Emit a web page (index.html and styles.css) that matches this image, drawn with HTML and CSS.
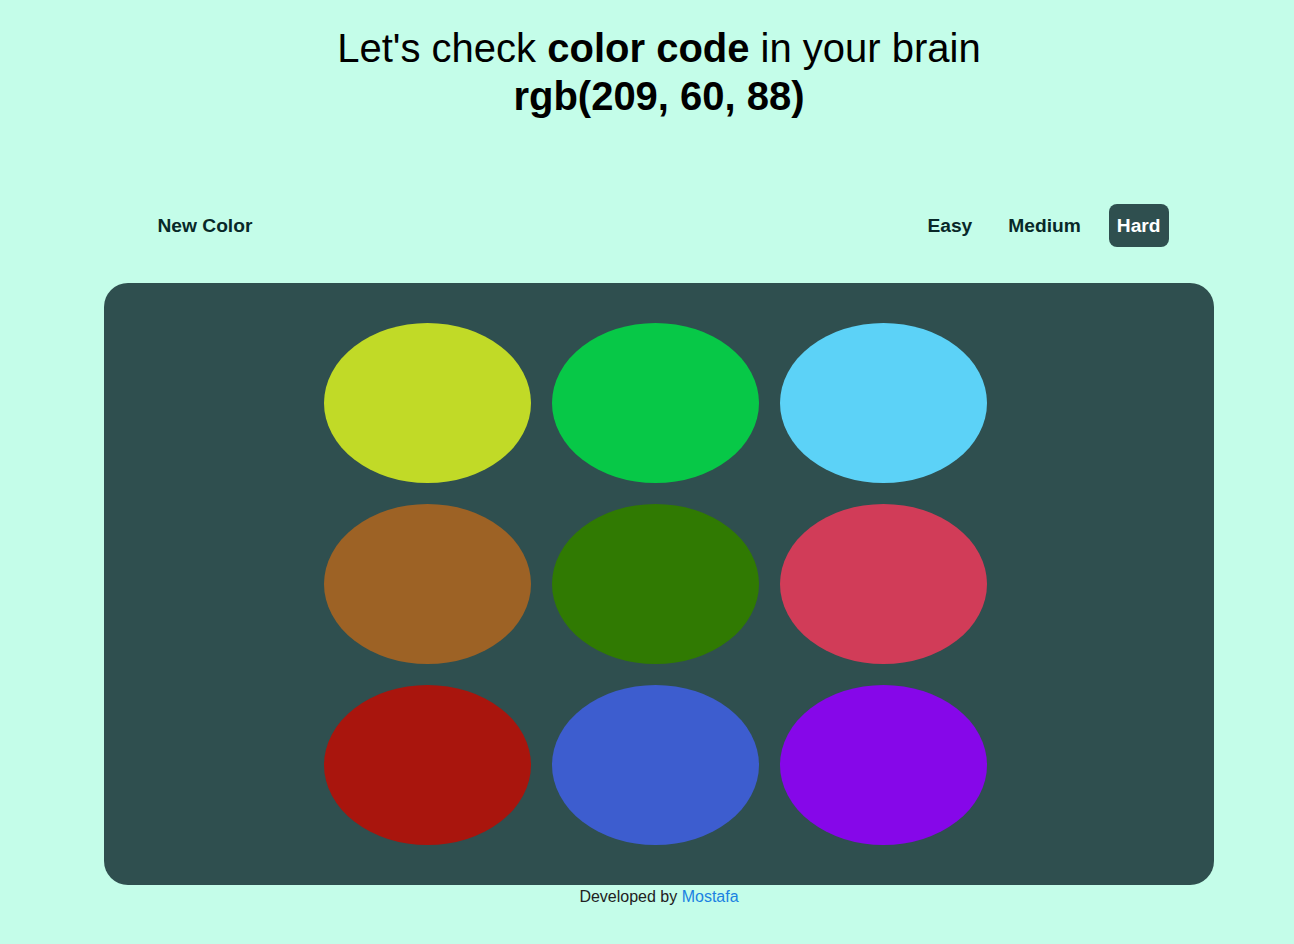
FILE: index.html
```html
<!DOCTYPE html>
<html lang="en">
<head>
<meta charset="utf-8">
<title>Color Game</title>
<link rel="stylesheet" href="styles.css">
</head>
<body>
<div class="page">
  <h1 class="title">Let's check <strong>color code</strong> in your brain<br><strong>rgb(209, 60, 88)</strong></h1>
  <div class="controls">
    <button class="btn">New Color</button>
    <div class="modes">
      <button class="btn">Easy</button>
      <button class="btn">Medium</button>
      <button class="btn active">Hard</button>
    </div>
  </div>
  <div class="board">
    <div class="grid">
      <div class="dot c1"></div>
      <div class="dot c2"></div>
      <div class="dot c3"></div>
      <div class="dot c4"></div>
      <div class="dot c5"></div>
      <div class="dot c6"></div>
      <div class="dot c7"></div>
      <div class="dot c8"></div>
      <div class="dot c9"></div>
    </div>
  </div>
  <p class="footer">Developed by <a href="#">Mostafa</a></p>
</div>
</body>
</html>
```
FILE: styles.css
```css
html, body {
  margin: 0;
  padding: 0;
  background: #c4fde9;
}
body {
  font-family: "Liberation Sans", Arial, sans-serif;
  padding-left: 24px;
}
.page {
  display: flex;
  flex-direction: column;
  align-items: center;
}
.title {
  margin: 24px 0 0;
  font-size: 40px;
  font-weight: normal;
  text-align: center;
  color: #000;
  line-height: 48px;
}
.title strong {
  font-weight: bold;
}
.controls {
  width: 1019px;
  margin-top: 84px;
  display: flex;
  justify-content: space-between;
  align-items: center;
}
.modes {
  display: flex;
  gap: 20px;
}
.btn {
  font-family: "Liberation Sans", Arial, sans-serif;
  font-size: 19.2px;
  font-weight: bold;
  line-height: 22px;
  color: #082828;
  background: transparent;
  border: none;
  border-radius: 8px;
  padding: 10.5px 8px;
  margin: 0;
}
.btn.active {
  background: #2f4f4f;
  color: #fff;
}
.board {
  width: 1110px;
  height: 602px;
  box-sizing: border-box;
  margin-top: 36px;
  background: #2f4f4f;
  border-radius: 24px;
  padding: 40px 0 40px 220px;
}
.grid {
  display: grid;
  grid-template-columns: repeat(3, 207px);
  grid-auto-rows: 160px;
  gap: 21px;
}
.dot {
  border-radius: 50%;
}
.c1 { background: rgb(193, 218, 39); }
.c2 { background: rgb(7, 200, 71); }
.c3 { background: rgb(92, 210, 247); }
.c4 { background: rgb(157, 98, 37); }
.c5 { background: rgb(48, 122, 2); }
.c6 { background: rgb(209, 60, 88); }
.c7 { background: rgb(169, 21, 13); }
.c8 { background: rgb(61, 93, 207); }
.c9 { background: rgb(134, 7, 233); }
.footer {
  margin: 3px 0 0;
  font-size: 16px;
  line-height: 18px;
  color: #222;
}
.footer a {
  color: #1a82e2;
  text-decoration: none;
}
```
